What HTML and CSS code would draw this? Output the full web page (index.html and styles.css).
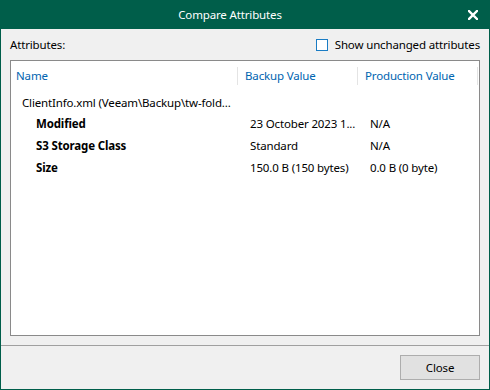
FILE: index.html
```html
<!DOCTYPE html>
<html>
<head>
<meta charset="utf-8">
<link rel="stylesheet" href="styles.css">
</head>
<body>
<div class="window">
  <div class="titlebar">
    <span class="title">Compare Attributes</span>
    <svg class="close-x" width="10" height="10" viewBox="0 0 10 10"><path d="M1 1 L9 9 M9 1 L1 9" stroke="#fff" stroke-width="2.4" stroke-linecap="square"/></svg>
  </div>
  <div class="content">
    <div class="toprow">
      <span>Attributes:</span>
      <label class="check"><span class="box"></span><span>Show unchanged attributes</span></label>
    </div>
    <div class="list">
      <div class="header">
        <div class="col c1">Name</div>
        <div class="col c2">Backup Value</div>
        <div class="col c3">Production Value</div>
        <div class="col c4"></div>
      </div>
      <div class="file">ClientInfo.xml (Veeam\Backup\tw-fold...</div>
      <div class="row"><div class="n">Modified</div><div class="b">23 October 2023 1...</div><div class="p">N/A</div></div>
      <div class="row"><div class="n">S3 Storage Class</div><div class="b">Standard</div><div class="p">N/A</div></div>
      <div class="row"><div class="n">Size</div><div class="b">150.0 B (150 bytes)</div><div class="p">0.0 B (0 byte)</div></div>
    </div>
  </div>
  <div class="footer">
    <button class="btn">Close</button>
  </div>
</div>
</body>
</html>
```
FILE: styles.css
```css
html, body { margin: 0; padding: 0; }
body {
  width: 490px; height: 390px; overflow: hidden;
  font-family: "Noto Sans", "Open Sans", sans-serif;
  font-size: 11.5px; letter-spacing: -0.15px; color: #000;
}
.window {
  width: 490px; height: 390px; box-sizing: border-box;
  background: #f0f0f0;
  border: 1px solid #005e4a; border-top: none;
  display: flex; flex-direction: column;
}
.titlebar {
  height: 29px; background: #005e4a; color: #fff;
  margin: 0 -1px;
  display: flex; align-items: center; justify-content: center;
  position: relative;
}
.title { font-size: 11.5px; margin-left: -30px; }
.close-x { position: absolute; right: 12px; top: 10px; }
.content { padding: 0 9px 0 9px; flex: 1; display: flex; flex-direction: column; }
.toprow {
  height: 30px; display: flex; align-items: center; justify-content: space-between;
  padding-top: 1px;
}
.check { display: flex; align-items: center; gap: 7px; }
.box { width: 10px; height: 10px; border: 1.5px solid #1a7cc4; background: #fff; display: inline-block; }
.list {
  height: 276px; box-sizing: border-box;
  background: #fff; border: 1px solid #8a8a8a;
}
.header { display: flex; height: 30px; align-items: center; color: #0064b0; }
.col { height: 18px; line-height: 18px; box-sizing: border-box; }
.c1 { width: 226px; padding-left: 5px; }
.c2 { width: 120px; padding-left: 7px; border-left: 1px solid #e4e4e4; }
.c3 { width: 120px; padding-left: 7px; border-left: 1px solid #e4e4e4; }
.c4 { border-left: 1px solid #e4e4e4; }
.file { height: 21px; line-height: 21px; padding-left: 11px; margin-top: 1px; }
.row { display: flex; height: 22px; line-height: 22px; }
.n { width: 239px; padding-left: 25px; box-sizing: border-box; font-weight: bold; }
.b { width: 120px; }
.footer {
  height: 44px; border-top: 1px solid #a0a0a0; margin-top: 9px;
  display: flex; justify-content: flex-end; align-items: center; padding-right: 9px;
}
.btn {
  width: 80px; height: 25px; margin-top: 1px;
  background: #e1e1e1; border: 1px solid #adadad;
  font-family: inherit; font-size: 11.5px; letter-spacing: -0.15px; color: #000; padding: 0;
}
```
